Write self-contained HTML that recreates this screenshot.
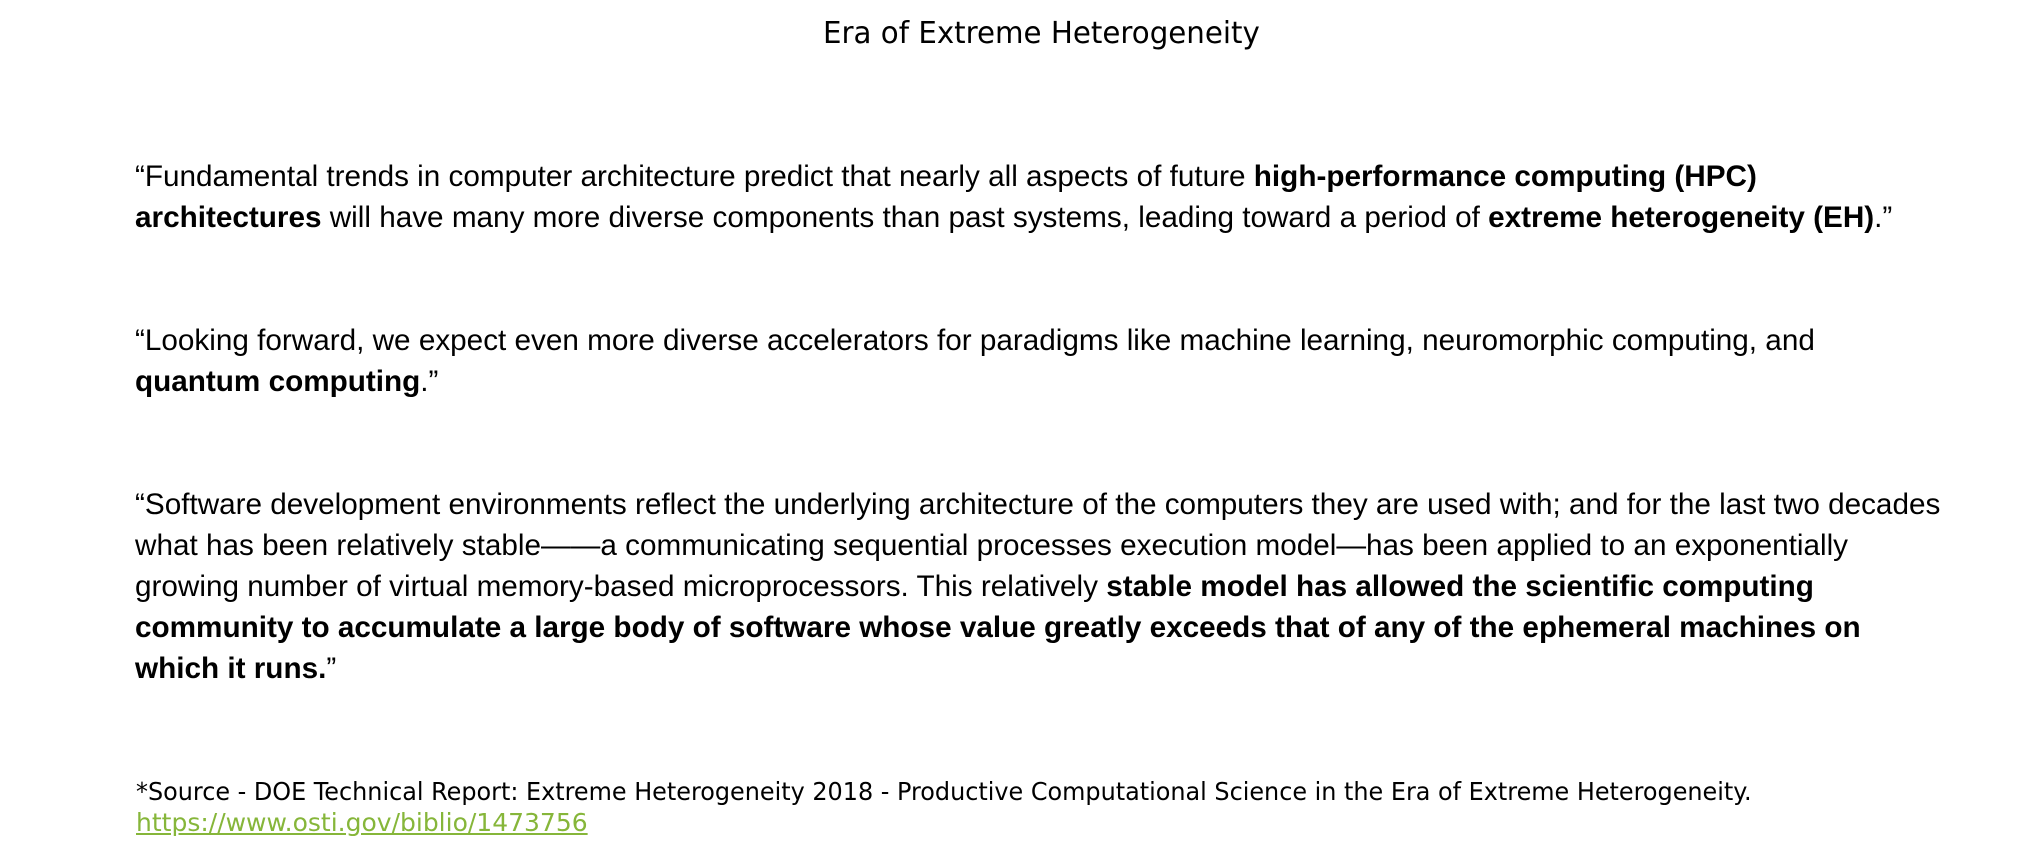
<!DOCTYPE html>
<html><head><meta charset="utf-8"><style>
html,body{margin:0;padding:0;background:#fff;width:2022px;height:866px;overflow:hidden;position:relative}
.t{position:absolute;white-space:nowrap;color:#000}
.b{font-family:"Liberation Sans",Arial,sans-serif;font-size:29.7px;line-height:29px}
.s{font-family:"DejaVu Sans",sans-serif;transform-origin:0 0}
b{font-weight:bold}
</style></head><body>
<div class="t s" style="left:823px;top:14px;font-size:30px;line-height:40px;transform:scaleX(0.976)">Era of Extreme Heterogeneity</div>

<div class="t b" style="left:135px;top:162px">“Fundamental trends in computer architecture predict that nearly all aspects of future <b>high-performance computing (HPC)</b></div>
<div class="t b" style="left:135px;top:203px"><b>architectures</b> will have many more diverse components than past systems, leading toward a period of <b>extreme heterogeneity (EH)</b>.”</div>

<div class="t b" style="left:135px;top:326px">“Looking forward, we expect even more diverse accelerators for paradigms like machine learning, neuromorphic computing, and</div>
<div class="t b" style="left:135px;top:367px"><b>quantum computing</b>.”</div>

<div class="t b" style="left:135px;top:490px">“Software development environments reflect the underlying architecture of the computers they are used with; and for the last two decades</div>
<div class="t b" style="left:135px;top:531px">what has been relatively stable——a communicating sequential processes execution model—has been applied to an exponentially</div>
<div class="t b" style="left:135px;top:572px">growing number of virtual memory-based microprocessors. This relatively <b>stable model has allowed the scientific computing</b></div>
<div class="t b" style="left:135px;top:613px"><b>community to accumulate a large body of software whose value greatly exceeds that of any of the ephemeral machines on</b></div>
<div class="t b" style="left:135px;top:654px"><b>which it runs.</b>”</div>

<div class="t s" style="left:136px;top:777px;font-size:25px;line-height:30px;transform:scaleX(0.956)">*Source - DOE Technical Report: Extreme Heterogeneity 2018 - Productive Computational Science in the Era of Extreme Heterogeneity.</div>
<div class="t s" style="left:136px;top:808px;font-size:25px;line-height:30px;transform:scaleX(1.0);color:#86b63a;text-decoration:underline">https://www.osti.gov/biblio/1473756</div>
</body></html>
